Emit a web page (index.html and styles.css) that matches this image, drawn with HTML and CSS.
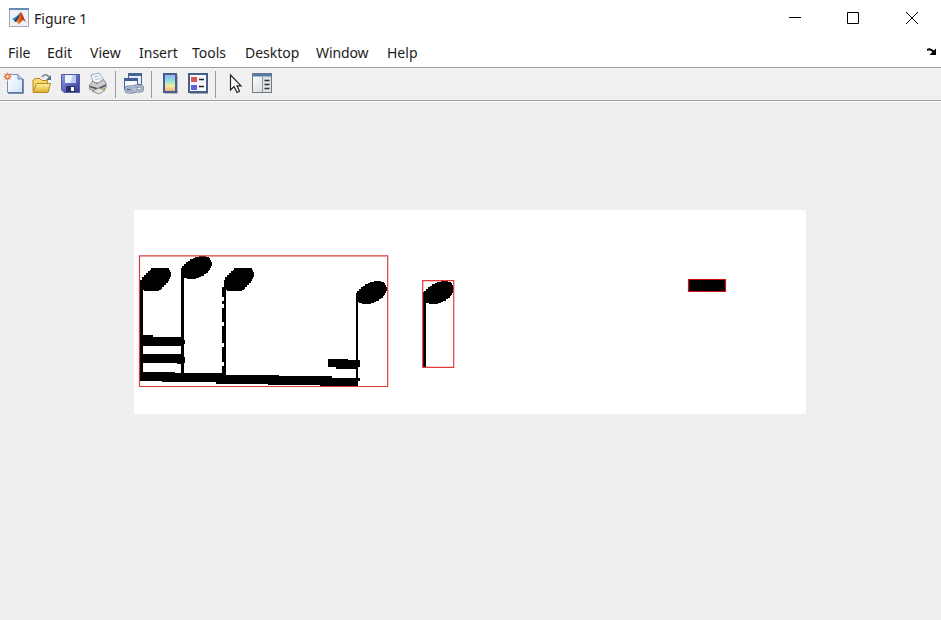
FILE: index.html
```html
<!DOCTYPE html>
<html lang="en">
<head>
<meta charset="utf-8">
<title>Figure 1</title>
<link rel="stylesheet" href="styles.css">
</head>
<body>
<header class="titlebar">
  <svg class="logo" width="20" height="20" viewBox="0 0 20 20">
    <defs><linearGradient id="flame"><stop offset="0" stop-color="#f6a12a"/><stop offset=".5" stop-color="#dd4e1e"/><stop offset="1" stop-color="#8e1d12"/></linearGradient></defs>
    <rect x=".5" y=".5" width="19" height="18" fill="#eef1f5" stroke="#a2abb7"/><path d="M0 1H20" stroke="#668caf" stroke-width="2"/>
    <path d="M3 11L8 8 12 4 11 10 7 14Z" fill="#398bc0"/><path d="M5 13L9 8 12 4 9 13 7 14Z" fill="#253c65"/>
    <path d="M12 4C14 6 15 11 17 14L14 12 10 16 7 13C10 12 10 6 12 4Z" fill="url(#flame)"/>
  </svg>
  <span class="title">Figure 1</span>
  <svg class="controls" width="130" height="14" viewBox="0 0 130 14" fill="none" stroke="#000">
    <path d="M1 6.5H13M59.5 1.5H70.5V12.5H59.5Z"/><path d="M118 1L130 13M130 1L118 13"/>
  </svg>
</header>
<nav class="menu">
  <span class="m-file">File</span><span class="m-edit">Edit</span><span class="m-view">View</span><span class="m-insert">Insert</span><span class="m-tools">Tools</span><span class="m-desktop">Desktop</span><span class="m-window">Window</span><span class="m-help">Help</span>
  <svg class="dock" width="10" height="8" viewBox="0 0 10 8"><path d="M0 2.2C2 .2 4 1 7.5 4.5" fill="none" stroke="#000" stroke-width="2"/><path d="M9 .5V7H2.5Z"/></svg>
</nav>
<div class="toolbar">
  <svg width="280" height="32" viewBox="0 68 280 32">
    <defs>
      <linearGradient id="paper" x2="1" y2="1"><stop stop-color="#fff"/><stop offset="1" stop-color="#cfe3fb"/></linearGradient>
      <linearGradient id="folder" x2="0" y2="1"><stop stop-color="#fff4a8"/><stop offset="1" stop-color="#e2ad25"/></linearGradient>
      <linearGradient id="disk" x2="1" y2="1"><stop stop-color="#9199e9"/><stop offset="1" stop-color="#30378f"/></linearGradient>
      <linearGradient id="bar" x2="0" y2="1"><stop stop-color="#9eaaf0"/><stop offset=".35" stop-color="#88dce6"/><stop offset=".65" stop-color="#f3ed9d"/><stop offset="1" stop-color="#f3a078"/></linearGradient>
      <linearGradient id="pane" x2="1" y2="1"><stop stop-color="#fff"/><stop offset="1" stop-color="#cdd3db"/></linearGradient>
    </defs>
    <g class="new">
      <path d="M7.5 74.5H18L22.5 79V92.5H7.5Z" fill="url(#paper)" stroke="#7c91b6"/><path d="M8 93H23V79" fill="none" stroke="#536c98" stroke-width="1.5"/><path d="M18 74.5V79H22.5" fill="#b4d1f2" stroke="#667ead"/>
      <path d="M4 73L11 80M11 73L4 80M7.5 72V81M3 76.5H12" stroke="#f3b496" stroke-width="1"/><circle cx="7.5" cy="76.5" r="2.3" fill="#ffe0a0" stroke="#dc7557" stroke-width="1.6"/>
    </g>
    <g class="open">
      <path d="M33 91V80L35 78.5H40L42 80.5H47.5V84" fill="#f6da70" stroke="#b58c2b"/><path d="M33 92.5L36.5 83.5H50.5L48 92.5Z" fill="url(#folder)" stroke="#b38722"/>
      <path d="M42 77C44 74 47 74 49 77" fill="none" stroke="#6f8295" stroke-width="1.5"/><path d="M51 75V80H46Z" fill="#566c85"/>
    </g>
    <g class="save">
      <path d="M61.5 74.5H79.5V92.5H64L61.5 90Z" fill="url(#disk)" stroke="#5159a9"/><path d="M65 75H76V83H65Z" fill="#edf2ff"/><path d="M73 75H76V83H70Z" fill="#bac9ef"/>
      <path d="M66 86H75V92H66Z" fill="#282f68"/><path d="M71 87H74V91H71Z" fill="#fff"/>
    </g>
    <g class="print">
      <path d="M93 82L91 75L99 73L104 80V84Z" fill="#f5f8ff" stroke="#99a6bd"/><path d="M94 77L99 76M95 79.5L101 78.5" stroke="#b4bdcb"/>
      <path d="M89.5 85L93 81 97 84 103 79.5 106 83V88L98 92 89.5 89Z" fill="#c9cbcd" stroke="#85898e"/><path d="M90 86.5L98 89 106 85" fill="none" stroke="#565a5d" stroke-width="1.8"/><path d="M92 91L99 88 105 90 99 94Z" fill="#e5e5e4" stroke="#85888b"/><path d="M101 89H104" stroke="#d6b943"/>
    </g>
    <path class="divider" d="M115.5 71V98M151.5 71V98M215.5 71V98"/>
    <g class="link">
      <path d="M128.5 73.5H141.5V84.5H128.5Z" fill="#e4edfb" stroke="#456692"/><path d="M128 74.5H142" stroke="#456692" stroke-width="3"/>
      <path d="M124.5 78.5H137.5V89.5H124.5Z" fill="#f5f9ff" stroke="#456692"/><path d="M124 79.5H138" stroke="#3e5f95" stroke-width="3"/>
      <g fill="none" stroke="#64758d" stroke-width="3"><rect x="126" y="87" width="9" height="5" rx="2.5"/><rect x="134" y="86" width="8.5" height="5" rx="2.5"/></g><g fill="none" stroke="#b7c6da" stroke-width="1.5"><rect x="126" y="87" width="9" height="5" rx="2.5"/><rect x="134" y="86" width="8.5" height="5" rx="2.5"/><path d="M131 89.5L138 88.5"/></g>
    </g>
    <path d="M165 75H178V94H165Z" fill="#b6babf"/><rect x="164" y="74" width="12" height="18" fill="url(#bar)" stroke="#455f8c" stroke-width="2"/>
    <g class="legend"><path d="M190 75H208V94H190Z" fill="#a1a7b1"/><rect x="189" y="74" width="18" height="18" fill="#f8f9ff" stroke="#455f8c" stroke-width="2"/><path d="M191 77H197V82H191Z" fill="#dc5557"/><path d="M191 85H197V90H191Z" fill="#6262d9"/><path d="M199 79.5H204M199 86.5H204" stroke="#222" stroke-width="1.4"/></g>
    <path d="M230.5 75V90L234 86.5 237 92.5 239.5 91.2 237 85.8H241Z" fill="#fff" stroke="#222" stroke-width="1.2"/>
    <g class="inspector"><rect x="252.5" y="73.5" width="19" height="19" fill="url(#pane)" stroke="#727981"/><path d="M252 75H272" stroke="#587ba3" stroke-width="3"/><path d="M262.5 77V92" stroke="#92979e"/><path d="M263 77H271V92H263Z" fill="#dfe2e6"/><path d="M264.5 80.5H269.5M264.5 84.5H269.5M264.5 88.5H269.5" stroke="#303030" stroke-width="1.5"/></g>
  </svg>
</div>
<main class="canvas">
  <svg class="score" width="672" height="204" viewBox="134 210 672 204" shape-rendering="crispEdges">
    <defs>
      <path id="head" d="M0 12H1V10H3V8H5V6H7V5H9V3H12V2H14V1H18V0H25V1H28V2H29V4H30V6H31V10H30V12H29V14H28V15H27V17H25V18H23V20H20V21H18V22H15V23H6V22H3V21H1V20H0Z"/>
      <path id="head-flat" d="M0 12H1V9H3V7H5V5H7V3H9V2H10V0H28V2H29V4H30V9H29V11H28V13H27V15H25V17H23V19H21V21H20V22H18V23H3V22H0Z"/>
    </defs>
    <rect x="134" y="210" width="672" height="204" fill="#fff"/>
    <use href="#head-flat" x="141" y="268"/><use href="#head" x="181" y="256"/><use href="#head-flat" x="224" y="268"/><use href="#head" x="356" y="281"/><use href="#head" x="423" y="281"/>
    <path d="M140 280H143V381H140ZM181 268H184V376H181ZM224 287H226V376H224ZM356 293H358V384H356ZM423 292H426V367H423Z"/>
    <path d="M222 287H224V297H222ZM222 301H224V304H222ZM222 308H224V322H222ZM222 326H224V343H222ZM222 347H224V362H222ZM222 366H224V376H222Z"/>
    <path d="M141 335H153V337H184V340H185V344H184V346H141ZM141 354H184V357H185V363H184V364H177V363H141Z"/>
    <path d="M141 372H175V373H223V375H279V376H332V378H360V381H358V386H320V385H268V384H216V382H162V381H141ZM328 359H348V360H360V367H358V369H336V367H328Z"/>
    <path d="M689 280H725V291H689Z"/>
    <path class="box" d="M139.5 255.8H387.7V386.5H139.5ZM422.7 280.7H453.7V367.3H422.7Z"/><path class="box bright" d="M688.5 279.5H725.5V291.5H688.5Z"/>
  </svg>
</main>
</body>
</html>
```
FILE: styles.css
```css
* { box-sizing: border-box; }
body {
  margin: 0;
  width: 941px;
  height: 620px;
  display: flex;
  flex-direction: column;
  overflow: hidden;
  background: #f0f0f0;
  color: #1c1c1c;
  font: 14px/20px "Noto Sans", "Open Sans", sans-serif;
}
svg { display: block; flex: none; }
.titlebar {
  height: 38px;
  display: flex;
  align-items: center;
  padding: 0 23px 2px 9px;
  background: #fff;
}
.title { margin-left: 5px; padding-top: 2px; }
.controls { margin-left: auto; }
.menu {
  height: 29px;
  display: flex;
  align-items: center;
  padding: 1px 4px 0 8px;
  background: #fff;
}
.m-file { width: 39px; }
.m-edit { width: 43px; }
.m-view { width: 49px; }
.m-insert { width: 53px; }
.m-tools { width: 53px; }
.m-desktop { width: 71px; }
.m-window { width: 71px; letter-spacing: -0.1px; }
.m-help { width: 40px; }
.dock { margin: -2px 0 0 auto; }
.toolbar {
  height: 34px;
  border-top: 1px solid #a0a0a0;
  border-bottom: 1px solid #a0a0a0;
  background: #f0f0f0;
}
.divider { fill: none; stroke: #999; }
.canvas {
  flex: 1;
  border-top: 1px solid #fafafa;
  padding: 108px 0 0 134px;
  background: #efefef;
}
.box {
  fill: none;
  stroke: #e03c3c;
  stroke-width: 1.2px;
  shape-rendering: geometricPrecision;
}
.bright { stroke: #d40e16; }
```
